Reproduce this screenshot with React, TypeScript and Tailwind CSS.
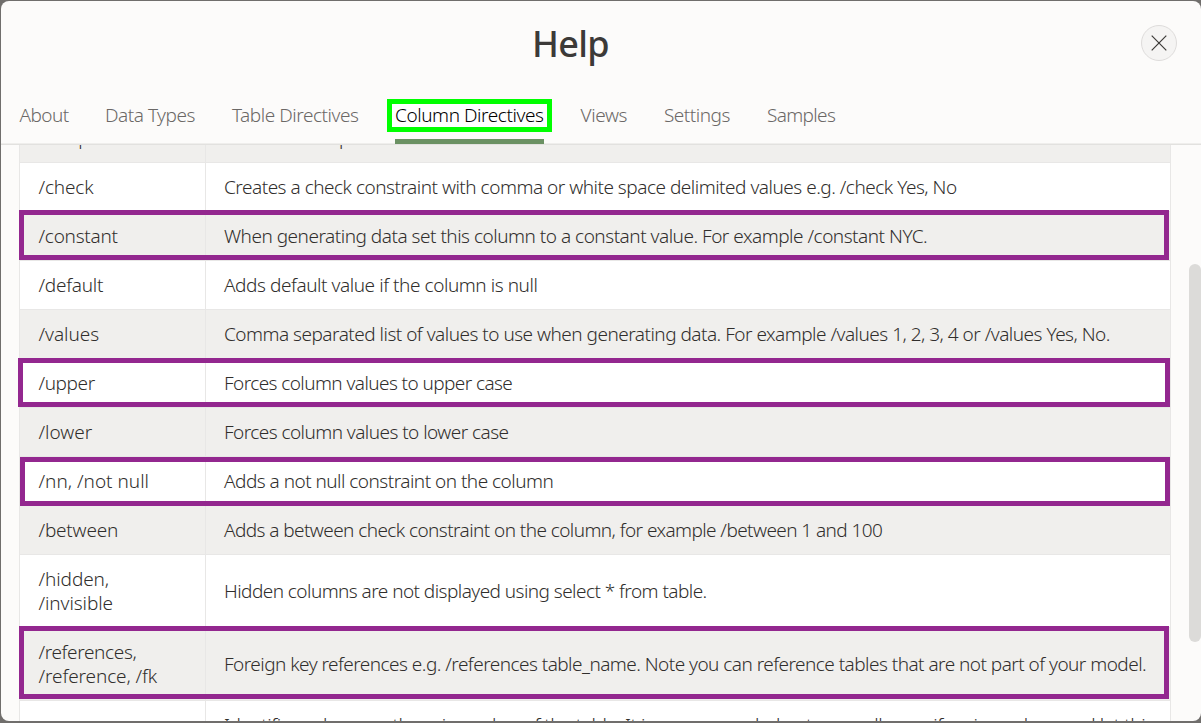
import React from "react";

type Line = [text: string, tracking: string];
type Row = { name: Line[]; text: Line[]; box?: string };

const tabs = [
  { label: "About", w: "w-[50px]", tracking: "tracking-[-0.55px] pl-[0.5px]" },
  { label: "Data Types", w: "w-[91px]", tracking: "tracking-[-0.48px]" },
  { label: "Table Directives", w: "w-[127px]", tracking: "tracking-[-0.45px]" },
  { label: "Column Directives", w: "w-[149px]", tracking: "tracking-[-0.43px]", active: true },
  { label: "Views", w: "w-[48px]", tracking: "tracking-[-0.4px] pl-[0.5px]" },
  { label: "Settings", w: "w-[67px]", tracking: "tracking-[-0.5px]" },
  { label: "Samples", w: "w-[69px]", tracking: "tracking-[-0.65px]" },
];

const rows: Row[] = [
  { name: [["/unique", "tracking-[-0.2px]"]], text: [["Creates a unique constraint", "tracking-[-0.35px]"]] },
  {
    name: [["/check", "tracking-[-0.15px]"]],
    text: [["Creates a check constraint with comma or white space delimited values e.g. /check Yes, No", "tracking-[-0.49px]"]],
  },
  {
    name: [["/constant", "tracking-[-0.25px]"]],
    text: [["When generating data set this column to a constant value. For example /constant NYC.", "tracking-[-0.49px]"]],
    box: "left-0 right-[2px] -top-px h-[50px]",
  },
  { name: [["/default", "tracking-[-0.25px]"]], text: [["Adds default value if the column is null", "tracking-[-0.44px]"]] },
  {
    name: [["/values", "tracking-[-0.05px]"]],
    text: [["Comma separated list of values to use when generating data. For example /values 1, 2, 3, 4 or /values Yes, No.", "tracking-[-0.508px]"]],
  },
  {
    name: [["/upper", "tracking-[-0.4px]"]],
    text: [["Forces column values to upper case", "tracking-[-0.58px]"]],
    box: "-left-px right-px top-0 h-[49px]",
  },
  { name: [["/lower", "tracking-[0px]"]], text: [["Forces column values to lower case", "tracking-[-0.55px]"]] },
  {
    name: [["/nn, /not null", "tracking-[0px]"]],
    text: [["Adds a not null constraint on the column", "tracking-[-0.52px]"]],
    box: "left-px right-px top-px h-[49px]",
  },
  {
    name: [["/between", "tracking-[-0.2px]"]],
    text: [["Adds a between check constraint on the column, for example /between 1 and 100", "tracking-[-0.575px]"]],
  },
  {
    name: [["/hidden,", "tracking-[-0.08px]"], ["/invisible", "tracking-[-0.08px]"]],
    text: [["Hidden columns are not displayed using select * from table.", "tracking-[-0.55px]"]],
  },
  {
    name: [["/references,", "tracking-[-0.36px]"], ["/reference, /fk", "tracking-[-0.1px]"]],
    text: [["Foreign key references e.g. /references table_name. Note you can reference tables that are not part of your model.", "tracking-[-0.533px]"]],
    box: "left-0 right-[2px] -top-px h-[73px]",
  },
  {
    name: [["/pk", "tracking-[0px]"]],
    text: [
      ["Identifies column as the primary key of the table. It is recommended not manually specify primary keys and let this", "tracking-[-0.45px]"],
      ["SQL shorthand create them for you automatically.", "tracking-[-0.5px]"],
    ],
  },
];

function Lines({ lines }: { lines: Line[] }) {
  return lines.map(([text, tracking]) => (
    <span key={text} className={`h-6 whitespace-nowrap ${tracking}`}>{text}</span>
  ));
}

export default function App() {
  return (
    <div className="h-[723px] w-[1201px] overflow-hidden bg-[#706e6c] pt-px pb-[2px] pl-px font-['Noto_Sans',sans-serif] font-light">
      <div className="flex h-[720px] flex-col overflow-hidden rounded-lg bg-[#fcfbfa]">
        <header className="relative flex h-[84px] shrink-0 justify-center pr-[61px]">
          <h1 className="mt-[18px] text-[36px] leading-[50px] font-medium tracking-[-0.7px] text-[#3c3a38]">Help</h1>
          <button className="absolute top-6 right-6 flex size-9 items-center justify-center rounded-full border-[1.5px] border-[#dedcdb] bg-[#f5f4f3]">
            <svg viewBox="0 0 16 16" className="size-4" stroke="#3d3b39" strokeWidth="1.2" fill="none">
              <path d="M0.7 0.7 15.3 15.3M15.3 0.7 0.7 15.3" />
            </svg>
          </button>
        </header>
        <nav className="flex h-[60px] shrink-0 gap-9 border-b border-[#e2e1df] pl-[18px] text-[19px] text-[#6b6866] shadow-[inset_0_-1px_0_#efeeec]">
          {tabs.map((t) => (
            <div key={t.label} className={`relative pt-[16px] leading-[28px] whitespace-nowrap ${t.w} ${t.tracking}`}>
              {t.active && <div className="absolute top-[14px] -right-2 -left-2 h-[33px] border-[5px] border-[#00ff00] bg-white" />}
              <span className={t.active ? "relative text-black" : "relative"}>{t.label}</span>
              {t.active && <div className="absolute top-[54px] right-0 left-0 h-[5px] bg-[#6b9163]" />}
            </div>
          ))}
        </nav>
        <main className="flex h-[576px] justify-between overflow-hidden pl-[18px]">
          <div className="-mt-[32px] w-[1152px] text-[19px] leading-6 text-[#302e2c]">
            {rows.map((r, i) => (
              <div key={r.name[0][0]} className={`relative flex items-stretch border-t border-r border-l border-[#e8e7e6] ${i % 2 ? "bg-white" : "bg-[#f0efed]"}`}>
                <div className="flex w-[186px] shrink-0 flex-col justify-center border-r border-[#e8e7e6] py-3 pl-[18.5px]">
                  <Lines lines={r.name} />
                </div>
                <div className="flex flex-col justify-center py-3 pl-[18px]">
                  <Lines lines={r.text} />
                </div>
                {r.box && <div className={`absolute z-10 -m-px border-[5px] border-[#93278f] ${r.box}`} />}
              </div>
            ))}
          </div>
          <div className="mt-[119px] h-[378px] w-3 rounded-full bg-[#dcdbd9]" />
        </main>
      </div>
    </div>
  );
}
